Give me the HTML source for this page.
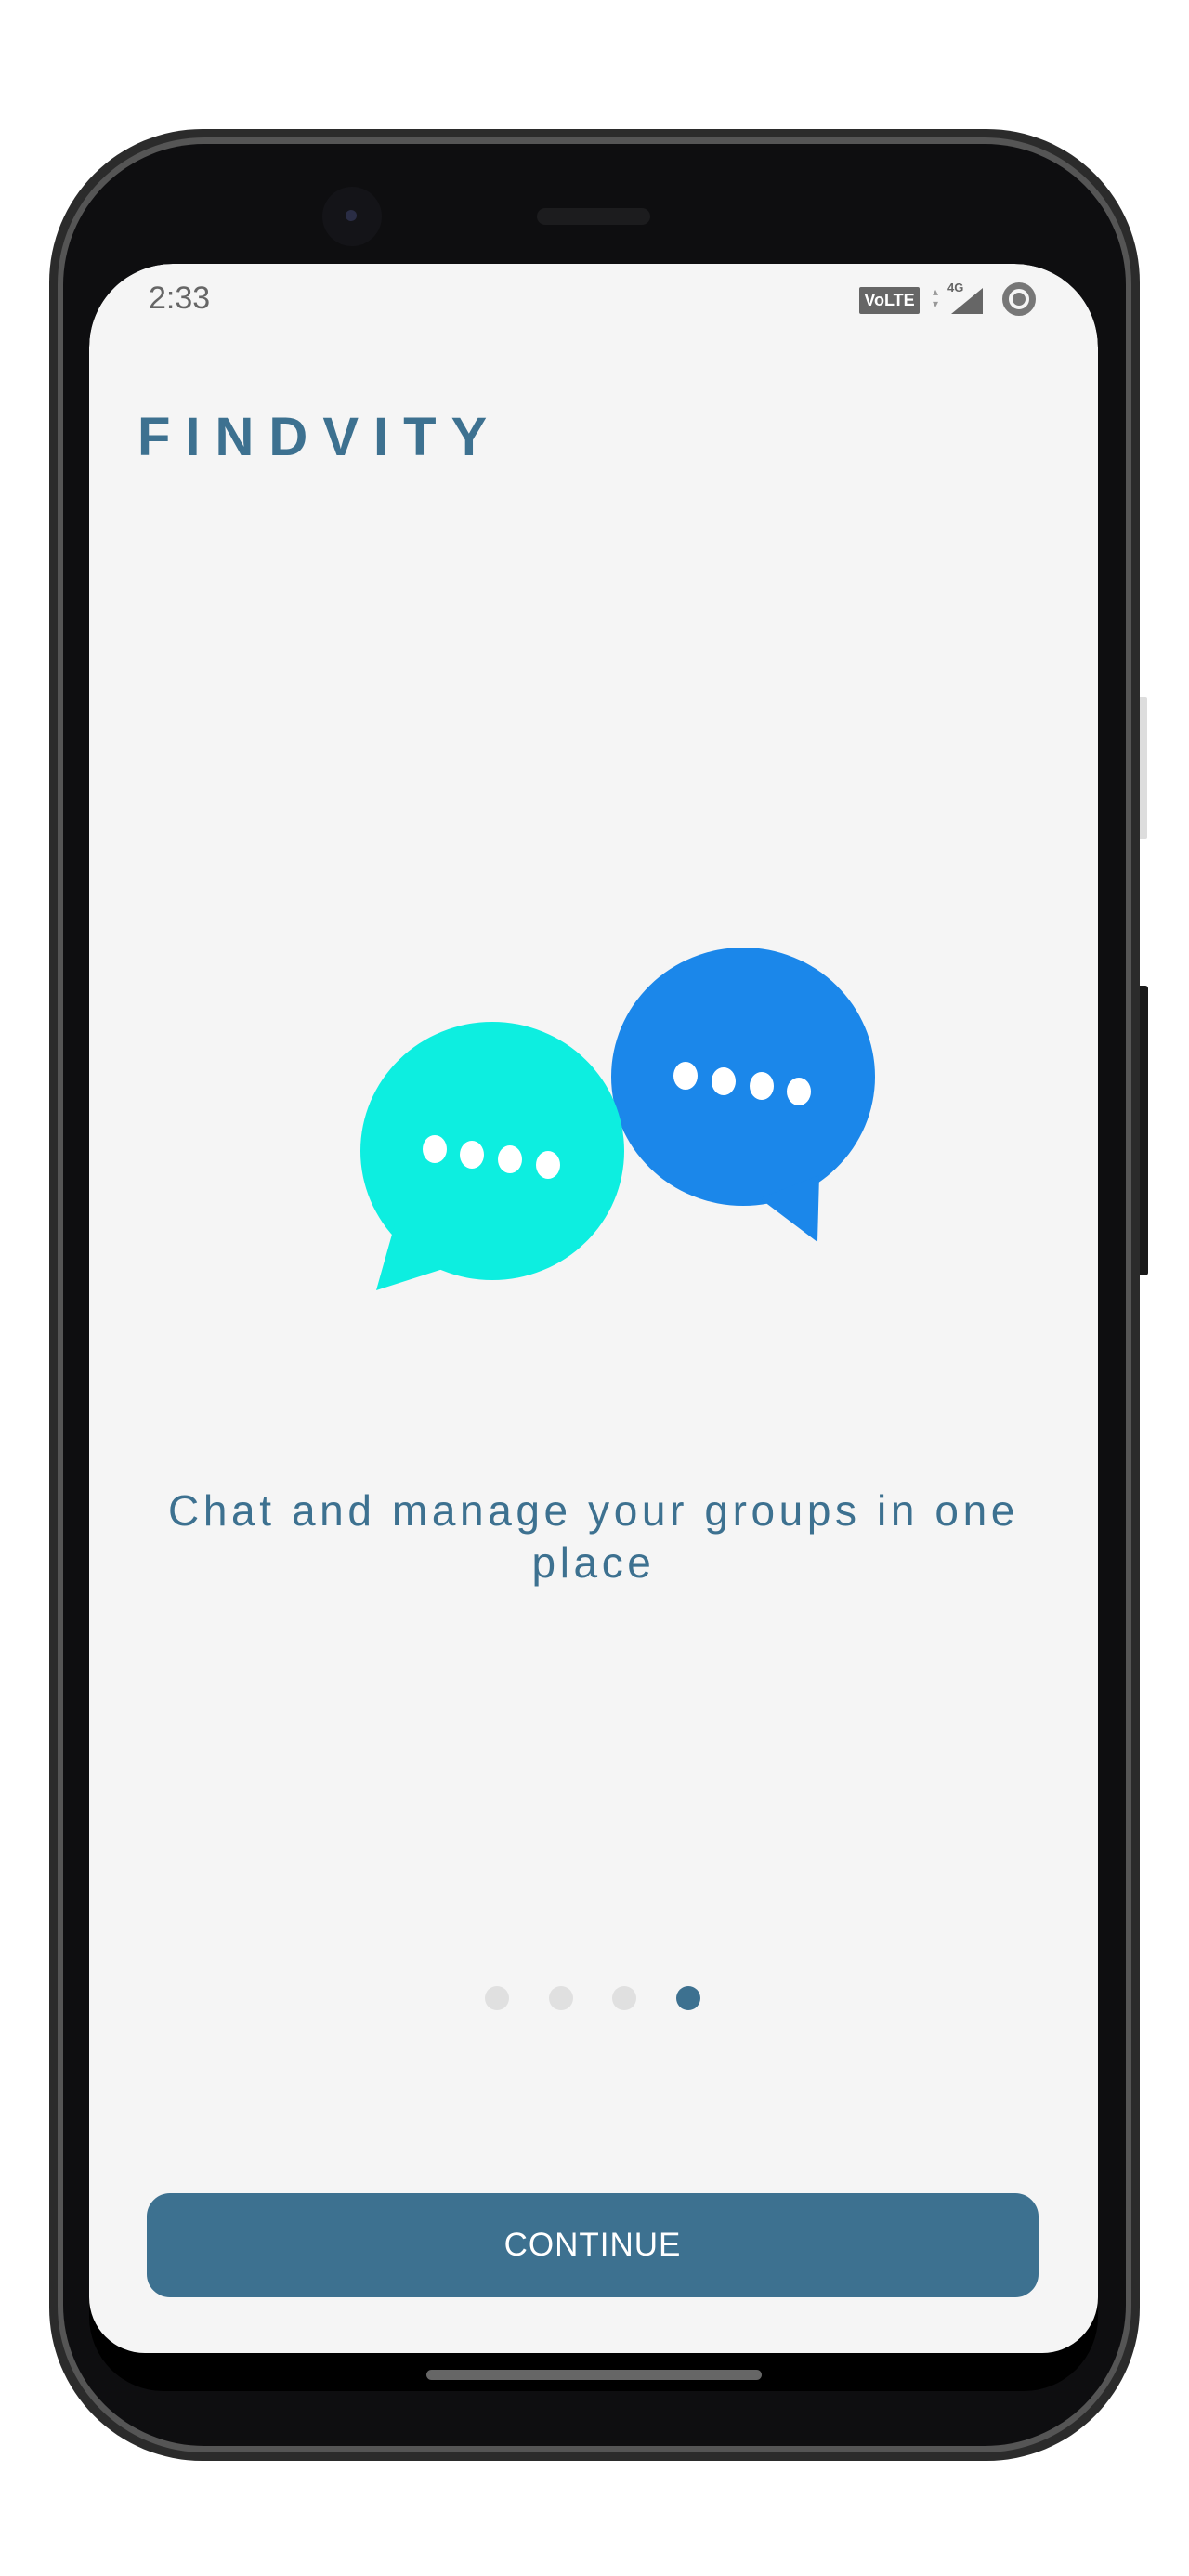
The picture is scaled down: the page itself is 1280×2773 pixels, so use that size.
<!DOCTYPE html>
<html><head><meta charset="utf-8"><style>
html,body{margin:0;padding:0;background:#fff;}
body{width:1280px;height:2773px;position:relative;overflow:hidden;font-family:"Liberation Sans",sans-serif;}
.abs{position:absolute;}
.outer{left:53px;top:139px;width:1174px;height:2510px;border-radius:165px;background:#2b2b2b;}
.rim{left:62px;top:148px;width:1156px;height:2492px;border-radius:158px;background:#555;}
.body{left:68px;top:155px;width:1144px;height:2478px;border-radius:152px;background:#0e0e10;}
.screen{left:96px;top:284px;width:1086px;height:2290px;border-radius:90px 90px 80px 80px;background:#000;overflow:hidden;}
.app{left:0;top:0;width:1086px;height:2249px;background:#f5f5f5;border-radius:90px 90px 60px 60px;}
</style></head><body>
<div class="abs" style="left:1225px;top:750px;width:10px;height:153px;background:#ddd;border-radius:2px"></div>
<div class="abs" style="left:1222px;top:1061px;width:14px;height:312px;background:#1a1a1a;border-radius:3px"></div>
<div class="abs outer"></div>
<div class="abs rim"></div>
<div class="abs body"></div>
<div class="abs" style="left:347px;top:201px;width:64px;height:64px;border-radius:50%;background:#141418"></div>
<div class="abs" style="left:372px;top:226px;width:12px;height:12px;border-radius:50%;background:#2a2d45"></div>
<div class="abs" style="left:578px;top:224px;width:122px;height:18px;border-radius:9px;background:#1c1c1e"></div>
<div class="abs screen">
 <div class="abs app">
  <div class="abs" style="left:64px;top:18px;font-size:34px;color:#666">2:33</div>
  <div class="abs" style="left:829px;top:25px;width:65px;height:29px;background:#666;border-radius:2px;color:#fff;font-size:18px;font-weight:bold;line-height:29px;text-align:center">VoLTE</div>
  <div class="abs" style="left:908px;top:24px;font-size:12px;color:#999;line-height:13px">▴<br>▾</div>
  <div class="abs" style="left:924px;top:18px;font-size:13px;color:#666;font-weight:bold">4G</div>
  <svg class="abs" style="left:928px;top:26px" width="34" height="28"><polygon points="34,0 34,28 0,28" fill="#666"/></svg>
  <div class="abs" style="left:983px;top:20px;border:7px solid #777;border-radius:50%;width:22px;height:22px"></div>
  <div class="abs" style="left:994px;top:31px;width:14px;height:14px;border-radius:50%;background:#777"></div>
  <div class="abs" style="left:52px;top:152px;font-size:58px;font-weight:bold;letter-spacing:16px;color:#3d7190;line-height:70px">FINDVITY</div>
  <svg class="abs" style="left:0;top:0" width="1086" height="2249">
   <g transform="translate(-96,-284)">
    <ellipse cx="800" cy="1159" rx="142" ry="139" fill="#1b87ea"/>
    <polygon points="818,1290 880,1337 882,1265" fill="#1b87ea"/>
    <ellipse cx="530" cy="1239" rx="142" ry="139" fill="#0deee0"/>
    <polygon points="425,1318 405,1389 480,1365" fill="#0deee0"/>
    <g fill="#fff">
     <ellipse cx="468" cy="1237" rx="13" ry="15"/><ellipse cx="508" cy="1243" rx="13" ry="15"/><ellipse cx="549" cy="1248" rx="13" ry="15"/><ellipse cx="590" cy="1254" rx="13" ry="15"/>
     <ellipse cx="738" cy="1158" rx="13" ry="15"/><ellipse cx="779" cy="1164" rx="13" ry="15"/><ellipse cx="820" cy="1169" rx="13" ry="15"/><ellipse cx="860" cy="1175" rx="13" ry="15"/>
    </g>
    <circle cx="535" cy="2151" r="13" fill="#e0e0e0"/><circle cx="604" cy="2151" r="13" fill="#e0e0e0"/><circle cx="672" cy="2151" r="13" fill="#e0e0e0"/><circle cx="741" cy="2151" r="13" fill="#3d7190"/>
   </g>
  </svg>
  <div class="abs" style="left:0;top:1314px;width:1086px;text-align:center;font-size:46px;line-height:56px;color:#3d7190;letter-spacing:4.6px">Chat and manage your groups in one<br>place</div>
  <div class="abs" style="left:62px;top:2077px;width:960px;height:112px;border-radius:25px;background:#3d7190;color:#fff;font-size:35px;line-height:112px;text-align:center;letter-spacing:1px">CONTINUE</div>
 </div>
 <div class="abs" style="left:363px;top:2267px;width:361px;height:11px;border-radius:6px;background:#666"></div>
</div>
</body></html>
